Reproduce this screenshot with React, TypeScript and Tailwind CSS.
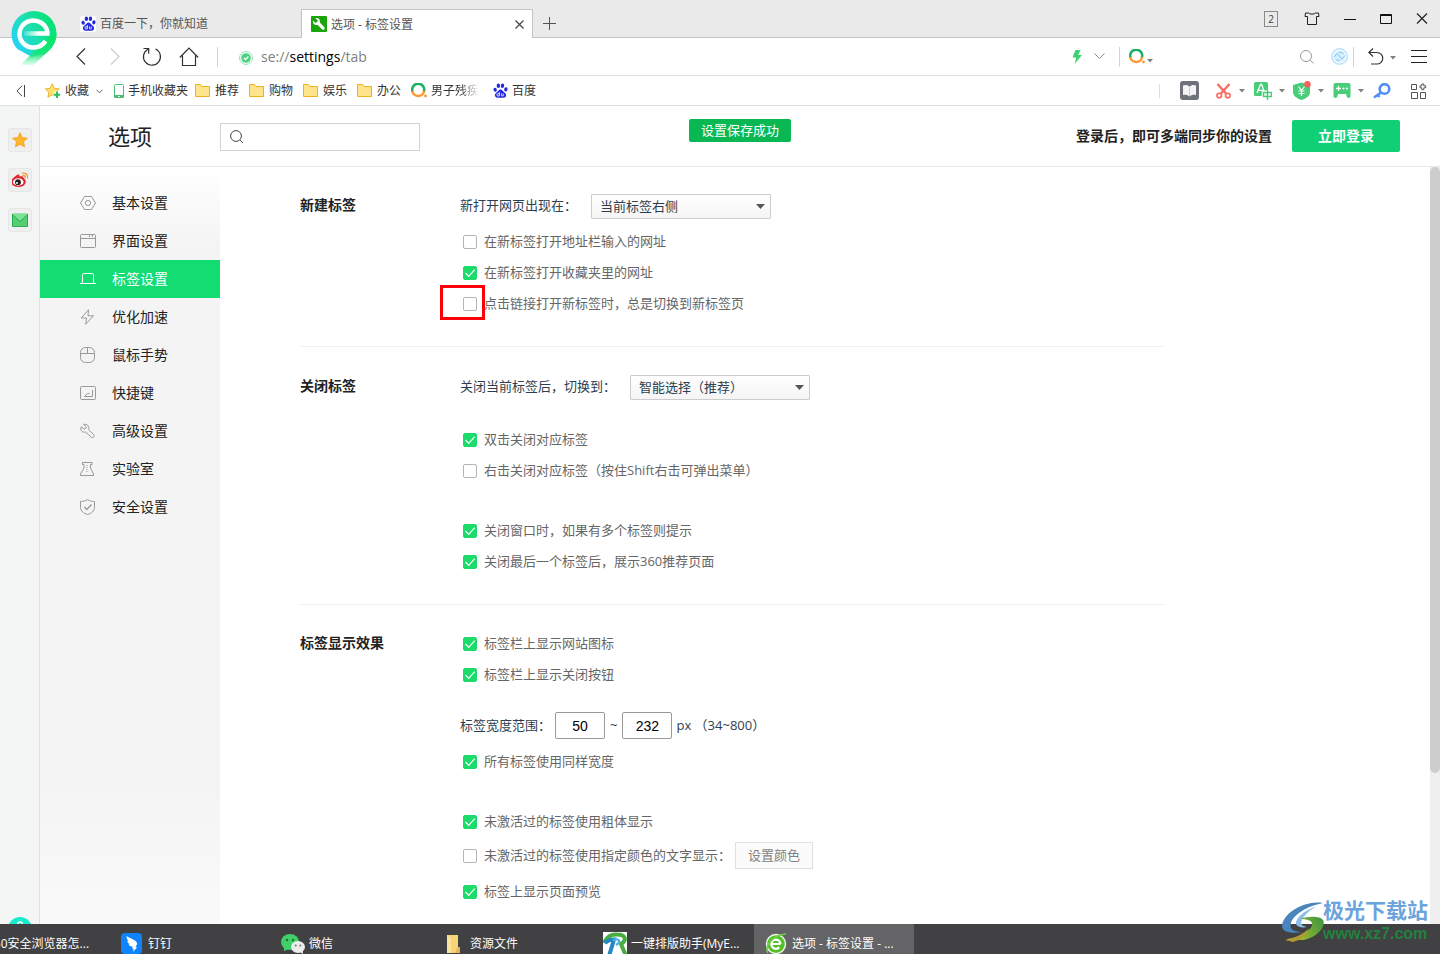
import React from "react";
import type { ReactNode } from "react";

type SvgProps = { w: number; h: number; box?: string; className?: string; children: ReactNode };

function Svg({ w, h, box, className, children }: SvgProps) {
  return (
    <svg width={w} height={h} viewBox={box ?? `0 0 ${w} ${h}`} fill="none" className={className ?? "shrink-0"} aria-hidden="true">
      {children}
    </svg>
  );
}

function Caret() {
  return (
    <Svg w={6} h={4}>
      <path d="M0 0h6L3 3.5z" fill="#808080" />
    </Svg>
  );
}

function Paw() {
  return (
    <Svg w={15} h={15} box="0 0 16 16">
      <g fill="#2329dc">
        <ellipse cx="2.3" cy="7.2" rx="1.8" ry="2.2" transform="rotate(-12 2.3 7.2)" />
        <ellipse cx="5.7" cy="2.9" rx="1.8" ry="2.5" />
        <ellipse cx="10.1" cy="2.9" rx="1.8" ry="2.5" transform="rotate(8 10.1 2.9)" />
        <ellipse cx="13.7" cy="6.8" rx="1.8" ry="2.2" transform="rotate(12 13.7 6.8)" />
        <path d="M8 6.800c1.800 0 2.400 1.600 3.600 2.800 1.300 1.200 2.600 2 2.400 3.700-.2 1.700-1.400 2.300-3 2.300H5c-1.700 0-2.900-.8-3-2.500-.1-1.600 1.200-2.300 2.400-3.400C5.700 8.500 6.200 6.800 8 6.800z" />
      </g>
      <path d="M6.800 9.700v4.100M6.800 11.400H5.300c-1.500 0-1.500 2.400 0 2.400h1.500M9 11.200v1.900c0 .7.8.7 1.900.7v-2.600" stroke="#fff" strokeWidth=".9" />
    </Svg>
  );
}

function Folder() {
  return (
    <Svg w={15} h={13}>
      <path d="M.5 12.500V.5h5l1.500 2h7.500v10z" fill="#ffe48c" stroke="#eeb11e" />
      <path d="M1 12.500h13.500" stroke="#eeb11e" />
    </Svg>
  );
}

function RingQ() {
  return (
    <Svg w={16} h={16}>
      <path d="M1.600 8.800A6 6 0 1 1 12.800 8.800" stroke="#19b264" strokeWidth="2.500" />
      <path d="M1.300 8a6 6 0 0 0 11.800 0" stroke="#fb9a37" strokeWidth="2.500" />
      <circle cx="14.500" cy="13" r="1.400" fill="#fb9a37" />
    </Svg>
  );
}

function BrandLogo() {
  return (
    <svg width="46" height="55" viewBox="0 0 46 55" fill="none" aria-hidden="true">
      <defs>
        <linearGradient id="brand" x1="4" y1="34" x2="42" y2="14" gradientUnits="userSpaceOnUse">
          <stop offset="0" stopColor="#26d3f2" />
          <stop offset=".5" stopColor="#1ddfb0" />
          <stop offset="1" stopColor="#07e274" />
        </linearGradient>
        <linearGradient id="tail" x1="0" y1="24" x2="0" y2="55" gradientUnits="userSpaceOnUse">
          <stop offset="0" stopColor="#05e562" />
          <stop offset=".6" stopColor="#1ae57c" />
          <stop offset="1" stopColor="#6cf0a8" stopOpacity=".1" />
        </linearGradient>
        <linearGradient id="bar" x1="12" y1="0" x2="34" y2="0" gradientUnits="userSpaceOnUse">
          <stop offset="0" stopColor="#fff" stopOpacity=".1" />
          <stop offset=".7" stopColor="#fff" />
        </linearGradient>
      </defs>
      <path d="M23 0a22.500 22.500 0 0 1 22.500 22.500c0 8-4 14-9 18.500L21 46 7 38.500C3 35 .5 29 .5 22.500A22.500 22.500 0 0 1 23 0z" fill="url(#brand)" />
      <path d="M45.500 22.500c0 7-3 12.500-7 16.500L22 54.500l-12-1L35 28z" fill="url(#tail)" />
      <path d="M36.500 22.500A14 13.500 0 1 0 34.500 30" stroke="#fff" strokeWidth="4.500" />
      <path d="M13 22.500h25.500" stroke="url(#bar)" strokeWidth="4.500" />
    </svg>
  );
}

const NAV: { label: string; icon: ReactNode; active?: boolean }[] = [
  {
    label: "基本设置",
    icon: (
      <g>
        <path d="M4.500 1.500h7l4 6.500-4 6.500h-7L.5 8z" />
        <circle cx="8" cy="8" r="2.600" />
      </g>
    ),
  },
  {
    label: "界面设置",
    icon: (
      <g>
        <rect x=".5" y="1.500" width="15" height="13" rx="1" />
        <path d="M.5 5.500h15M9.500 2v2M12.500 2v2" />
      </g>
    ),
  },
  { label: "标签设置", active: true, icon: <path d="M0 12.500h16M2.500 12.500v-9a1 1 0 0 1 1-1h9a1 1 0 0 1 1 1v9" /> },
  { label: "优化加速", icon: <path d="M8.500.8 1.200 9h5.300l-.8 6.200L13.500 6.800H8z" /> },
  {
    label: "鼠标手势",
    icon: (
      <g>
        <rect x=".5" y=".5" width="14" height="15" rx="5" />
        <path d="M.5 6.500h14M7.500.5v6" />
      </g>
    ),
  },
  {
    label: "快捷键",
    icon: (
      <g>
        <rect x=".5" y="1.500" width="15" height="13" rx="1" />
        <path d="M12.500 5v6.500H4.500l3-3h2" />
      </g>
    ),
  },
  {
    label: "高级设置",
    icon: <path d="M3.600 1.500 6.500 4.200 4.700 6.300 1.300 3.900C-.2 7.200 2.200 9.900 5.700 9l5.600 5.300c1.800 1.200 3.800-.8 2.600-2.400L8.700 6.800C9.600 3.200 7 .4 3.600 1.500z" />,
  },
  {
    label: "实验室",
    icon: (
      <g>
        <path d="M2.500 1.500h9.500v2h-1.500v3.500l3 6v1.500H.5V13l3.500-6V3.500H2.500z" />
        <path d="M7 4v7" strokeDasharray="1 1" />
      </g>
    ),
  },
  {
    label: "安全设置",
    icon: (
      <g>
        <path d="M7.500.6c2.200 1.300 4.500 1.900 7 1.900v6c0 3.400-3.200 5.900-7 7-3.800-1.100-7-3.600-7-7v-6c2.500 0 4.800-.6 7-1.900z" />
        <path d="m4.300 7.800 2.500 2.600 4.700-4.900" strokeWidth="1.400" />
      </g>
    ),
  },
];

function Check({ children, checked, marked }: { children: ReactNode; checked?: boolean; marked?: boolean }) {
  return (
    <label className="relative flex h-[31px] w-fit items-center gap-[7px] pl-[3px] text-[13px] text-[#666]">
      <span className="grid place-items-center">
        <input
          type="checkbox"
          defaultChecked={checked}
          className="peer size-[14px] appearance-none rounded-[2px] border border-[#b4b4b4] bg-white [grid-area:1/1] checked:border-[#1bdb6b] checked:bg-[#1bdb6b]"
        />
        <svg width="14" height="14" viewBox="0 0 14 14" fill="none" className="pointer-events-none hidden [grid-area:1/1] peer-checked:block" aria-hidden="true">
          <path d="m2.500 7 3.200 3.300L11.700 3.700" stroke="#fff" strokeWidth="1.200" />
        </svg>
      </span>
      {children}
      {marked && <span className="pointer-events-none absolute -left-5 -top-[3px] h-[35px] w-[45px] border-3 border-[#fb0007]" />}
    </label>
  );
}

function Picker({ id, label, value }: { id: string; label: string; value: string }) {
  return (
    <div className="flex items-center gap-[14px] text-[13px] text-[#2c3e50]">
      <label htmlFor={id} className="pb-[2px]">{label}</label>
      <span className="grid items-center">
        <select
          id={id}
          className="h-[25px] w-[180px] appearance-none rounded-[1px] border border-[#ccc] bg-linear-to-b from-white to-[#f5f5f5] px-2 [grid-area:1/1]"
        >
          <option>{value}</option>
        </select>
        <svg width="9" height="5" viewBox="0 0 9 5" className="pointer-events-none mr-[6px] justify-self-end [grid-area:1/1]" aria-hidden="true">
          <path d="M0 0h9L4.500 5z" fill="#555" />
        </svg>
      </span>
    </div>
  );
}

function Section({ title, pad, last, children }: { title: string; pad: string; last?: boolean; children: ReactNode }) {
  return (
    <section className={`flex w-full max-w-[864px] ${pad} ${last ? "" : "border-b border-[#f0f0f0] pb-[27px]"}`}>
      <h2 className={`w-40 shrink-0 text-[14px] font-bold leading-5 text-[#222] ${last ? "pt-[5px]" : "pt-px"}`}>{title}</h2>
      <div className="flex-1">{children}</div>
    </section>
  );
}

function TabStrip() {
  return (
    <header className="flex h-[38px] shrink-0 items-end border-b border-[#c3c3c3] bg-[#eaeaea] pl-20">
      <div className="flex h-[27px] w-[221px] items-center gap-1 text-[12px] text-[#555]">
        <span className="grid size-4 shrink-0 place-items-center rounded-[2px] bg-white">
          <Paw />
        </span>
        百度一下，你就知道
      </div>
      <div className="-mb-px flex h-[29px] w-[232px] items-center border border-b-0 border-[#c3c3c3] bg-white pl-[9px] pr-2 text-[12px] text-[#555]">
        <Svg w={16} h={16}>
          <rect width="16" height="16" rx="1" fill="#1ba30a" />
          <path d="M4.300 2.200 6.800 4.600 6 6.300l-1.800.5L2 4.600C1.300 7.700 3.800 9.700 6.400 8.800l4.800 4.700c1.600 1 3.300-.8 2.200-2.300L8.800 6.500C9.600 3.700 7.200 1.200 4.300 2.200z" fill="#fff" />
        </Svg>
        <span className="flex-1 pl-1 pt-px">选项 - 标签设置</span>
        <button type="button" aria-label="关闭标签页">
          <Svg w={9} h={9}>
            <path d="m.5.5 8 8m0-8-8 8" stroke="#444" strokeWidth="1.200" />
          </Svg>
        </button>
      </div>
      <button type="button" aria-label="新标签页" className="mb-[7px] ml-[10px]">
        <Svg w={13} h={13}>
          <path d="M6.500 0v13M0 6.500h13" stroke="#555" />
        </Svg>
      </button>
      <div className="ml-auto flex h-full items-center gap-6 pr-3">
        <button type="button" className="grid h-4 w-[14px] place-items-center border border-[#8a8a8a] text-[10px] leading-none text-[#444]">2</button>
        <button type="button" aria-label="皮肤" className="ml-[2px]">
          <Svg w={16} h={14}>
            <path d="M4.500 1H1.500L1 4.500h2.500v8h9v-8H15L14.500 1h-3c-1 1.500-6 1.500-7 0z" stroke="#222" />
          </Svg>
        </button>
        <button type="button" aria-label="最小化">
          <Svg w={12} h={12}>
            <path d="M0 6.500h12" stroke="#111" />
          </Svg>
        </button>
        <button type="button" aria-label="最大化">
          <Svg w={12} h={10}>
            <path d="M.5.5h11v9H.5zM0 1.500h12" stroke="#111" />
          </Svg>
        </button>
        <button type="button" aria-label="关闭">
          <Svg w={12} h={11}>
            <path d="m1 .5 10 10m0-10-10 10" stroke="#222" strokeWidth="1.200" />
          </Svg>
        </button>
      </div>
    </header>
  );
}

function Toolbar() {
  return (
    <div className="flex h-[38px] shrink-0 items-center border-b border-[#e0e0e0] pl-[76px] pr-[13px]">
      <div className="flex items-center gap-6">
        <button type="button" aria-label="后退">
          <Svg w={10} h={17}>
            <path d="M9 .5 1 8.500l8 8" stroke="#333" strokeWidth="1.200" />
          </Svg>
        </button>
        <button type="button" aria-label="前进">
          <Svg w={10} h={17}>
            <path d="m1 .5 8 8-8 8" stroke="#ccc" strokeWidth="1.200" />
          </Svg>
        </button>
      </div>
      <div className="ml-[22px] flex items-center gap-[17px]">
        <button type="button" aria-label="刷新">
          <Svg w={20} h={20}>
            <path d="M13.500 2a8.500 8.500 0 1 1-7.500.2M1.500 1.500h5.200v5.200" stroke="#333" strokeWidth="1.200" />
          </Svg>
        </button>
        <button type="button" aria-label="主页">
          <Svg w={20} h={20}>
            <path d="M.8 10.500 10 1.200l9.200 9.300M3.500 8.500v10h13v-10" stroke="#333" strokeWidth="1.200" />
          </Svg>
        </button>
      </div>
      <span className="ml-[18px] h-5 w-px bg-[#d5d5d5]" />
      <span className="ml-[21px] mt-[3px]">
        <Svg w={14} h={14}>
          <circle cx="7" cy="7" r="6.400" stroke="#8ce0ac" />
          <circle cx="7" cy="7" r="4.800" fill="#4fd184" />
          <path d="m4.800 7 1.700 1.700 2.900-3.200" stroke="#fff" strokeWidth="1.200" />
        </Svg>
      </span>
      <a href="#tab" className="ml-[8px] flex-1 text-[14px] text-[#808080]">
        se://<span className="text-black">settings</span>/tab
      </a>
      <div className="flex items-center">
        <Svg w={10} h={14}>
          <path d="M3.500 0h5L6.300 5H10L2.700 14l1.500-6.500H.5z" fill="#3fd074" />
        </Svg>
        <span className="ml-3">
          <Svg w={11} h={7}>
            <path d="m.5.5 5 5 5-5" stroke="#888" />
          </Svg>
        </span>
        <span className="ml-[14px] mr-[9px] h-5 w-px bg-[#d5d5d5]" />
        <RingQ />
        <span className="ml-[2px] mt-2">
          <Caret />
        </span>
      </div>
      <div className="ml-[147px] flex items-center">
        <button type="button" aria-label="搜索">
          <Svg w={14} h={14}>
            <circle cx="6" cy="6" r="5.500" stroke="#999" />
            <path d="m10 10 3.500 3.500" stroke="#999" />
          </Svg>
        </button>
        <span className="ml-[17px]">
          <Svg w={17} h={17}>
            <circle cx="8.500" cy="8.500" r="7.700" stroke="#b8e2fb" strokeWidth="1.500" />
            <circle cx="8.500" cy="8.500" r="6" fill="#d9effd" />
            <path d="m3 9 3-3.500L11 11l3-3.500M8 4.500l2-.5 2.500 2M4.500 11l2 1.500 2.500-.5" stroke="#7cc6f5" />
          </Svg>
        </span>
        <span className="ml-[5px] mr-[14px] h-5 w-px bg-[#d5d5d5]" />
        <button type="button" aria-label="撤销">
          <Svg w={16} h={17}>
            <path d="M5 .5.8 4.500l4.200 4M1 4.500h8a5.700 5.700 0 0 1 0 11.500H3" stroke="#333" strokeWidth="1.200" />
          </Svg>
        </button>
        <span className="ml-[6px] mt-[2px]">
          <Caret />
        </span>
        <button type="button" aria-label="菜单" className="ml-[15px]">
          <Svg w={16} h={14}>
            <path d="M0 .5h16M0 6.500h16M0 12.500h16" stroke="#222" />
          </Svg>
        </button>
      </div>
    </div>
  );
}

const FOLDERS = ["推荐", "购物", "娱乐", "办公"];

function BookmarkBar() {
  return (
    <div className="flex h-[30px] shrink-0 items-center border-b border-[#e0e0e0] pl-4 pr-[13px] text-[12px] text-[#333]">
      <button type="button" aria-label="收起">
        <Svg w={10} h={12}>
          <path d="M6 .8 1 6l5 5.200M8.500 0v12" stroke="#444" />
        </Svg>
      </button>
      <a href="#fav" className="ml-[19px] flex items-center gap-1">
        <Svg w={16} h={16}>
          <path d="m7.200.8 2.100 4.500 4.900.6-3.600 3.400.9 4.900-4.300-2.400-4.300 2.400.9-4.900L.3 5.900l4.800-.6z" fill="#ffe070" stroke="#f2b233" />
          <path d="M12 8v7.500M8.200 11.700h7.500" stroke="#fff" strokeWidth="4" />
          <path d="M12 8.500v6.500M8.700 11.700h6.500" stroke="#2fbf63" strokeWidth="2" />
        </Svg>
        收藏
      </a>
      <span className="ml-[7px] mt-[2px]">
        <Svg w={7} h={5}>
          <path d="m.5.8 3 3 3-3" stroke="#666" />
        </Svg>
      </span>
      <a href="#phone" className="ml-[11px] flex items-center gap-1">
        <Svg w={10} h={14}>
          <rect x=".5" y=".5" width="9" height="13" rx="1" fill="#fff" stroke="#45bf73" />
          <path d="M0 11h10v2l-1 1H1l-1-1z" fill="#45bf73" />
          <path d="M4 12.500h2" stroke="#fff" />
        </Svg>
        手机收藏夹
      </a>
      <nav className="ml-[7px] flex items-center gap-[10px]">
        {FOLDERS.map((f) => (
          <a key={f} href="#folder" className="flex items-center gap-[5px]">
            <Folder />
            {f}
          </a>
        ))}
        <a href="#so" className="flex items-center gap-1">
          <RingQ />
          <span className="w-12 overflow-hidden whitespace-nowrap [mask-image:linear-gradient(to_right,black_60%,transparent)]">男子残疾人</span>
        </a>
        <a href="#baidu" className="ml-1 flex items-center gap-1">
          <Paw />
          百度
        </a>
      </nav>
      <div className="ml-auto flex items-center">
        <span className="mr-[20px] h-[14px] w-px bg-[#ddd]" />
        <Svg w={19} h={19}>
          <rect width="19" height="19" rx="3" fill="#70727a" />
          <path d="M3 4.500c2.500-1 4.500-.5 6.500 1 2-1.500 4-2 6.500-1V14c-2.500-.6-4.500-.2-6.500 1.300C7.500 13.800 5.500 13.400 3 14z" fill="#f4f4f4" />
          <path d="M9.500 5.500v9.800" stroke="#ccc" />
        </Svg>
        <span className="ml-[17px] flex items-center gap-2">
          <Svg w={15} h={16}>
            <path d="M1.500 1 10.500 11M13.500 1 4.500 11" stroke="#fc6d65" strokeWidth="2.500" />
            <circle cx="3.200" cy="12.600" r="2.300" stroke="#fc6d65" strokeWidth="1.700" />
            <circle cx="11.800" cy="12.600" r="2.300" stroke="#fc6d65" strokeWidth="1.700" />
          </Svg>
          <Caret />
        </span>
        <span className="ml-[9px] flex items-center gap-[7px]">
          <Svg w={18} h={18}>
            <rect width="14" height="14" rx="1.500" fill="#48ce78" />
            <path d="m3 11 3.500-8.500h1L11 11M4.300 8.300h5" stroke="#fff" strokeWidth="1.300" />
            <path d="M13.500 8v10M9.500 10.500h8v4h-8z" stroke="#fff" strokeWidth="3.500" />
            <path d="M13.500 8v10M9.500 10.500h8v4h-8z" stroke="#48ce78" strokeWidth="1.500" />
          </Svg>
          <Caret />
        </span>
        <span className="ml-[8px] flex items-center gap-[7px]">
          <Svg w={18} h={19}>
            <path d="M8.500 1.500 17 4v7c0 4-4 6.500-8.500 8C4 17.500 0 15 0 11V4z" fill="#48ce78" />
            <path d="m5.500 5.500 3 4 3-4M8.500 9.500V15M5.500 10h6M5.500 12.500h6" stroke="#fff" strokeWidth="1.200" />
            <circle cx="14.500" cy="3.200" r="3.200" fill="#fb5f5b" />
          </Svg>
          <Caret />
        </span>
        <span className="ml-[9px] flex items-center gap-[7px]">
          <Svg w={18} h={15}>
            <path d="M2.500 0h13C17 0 17.500 1 17.500 2.500V13c0 2.500-3.500 2.500-4 0L13 11H5l-.5 2c-.5 2.500-4 2.500-4 0V2.500C.5 1 1 0 2.500 0z" fill="#48ce78" />
            <path d="M5.500 3v5M3 5.500h5" stroke="#fff" strokeWidth="1.300" />
            <circle cx="10.500" cy="5.500" r="1.100" fill="#fff" />
            <circle cx="14" cy="5.500" r="1.100" fill="#fff" />
          </Svg>
          <Caret />
        </span>
        <span className="ml-[9px]">
          <Svg w={18} h={16}>
            <circle cx="11.500" cy="6" r="4.800" stroke="#4f8ff5" strokeWidth="2.600" />
            <path d="m8 9.500-7 5M4 11l2.500 3" stroke="#4f8ff5" strokeWidth="2.600" />
          </Svg>
        </span>
        <button type="button" aria-label="扩展" className="ml-5">
          <Svg w={16} h={16}>
            <path d="M.5 1.500h5v5h-5zM.5 9.500h6v6h-6zM9.500 9.500h5v6h-5z" stroke="#555" />
            <path d="M10.800 2.800V1h2v1.800h1.900v2h-1.900v1.900h-2V4.800H9v-2z" stroke="#555" />
          </Svg>
        </button>
      </div>
    </div>
  );
}

const RAIL: { label: string; icon: ReactNode }[] = [
  { label: "收藏夹", icon: <path d="m8 .8 2.200 4.800 5.200.6-3.900 3.500 1.100 5.200L8 12.300l-4.600 2.600 1.100-5.200L.6 6.200l5.200-.6z" fill="#ffb62b" stroke="#f29a22" strokeWidth=".8" /> },
  {
    label: "微博",
    icon: (
      <g transform="translate(-1 0)">
        <ellipse cx="7.500" cy="9.800" rx="7.300" ry="5.200" fill="#e6232d" />
        <path d="M2 7c2-3.500 5-5 6-4.500 1 .6.200 2 .2 2s4-1 4 1L13 9z" fill="#e6232d" />
        <ellipse cx="7.300" cy="10" rx="5.300" ry="3.700" fill="#fff" />
        <circle cx="7" cy="10.200" r="2.900" fill="#222" />
        <circle cx="6" cy="11" r="1" fill="#fff" />
        <path d="M11 1.200c3.500-.8 6.500 2 5.500 5.500M11.500 3.600c1.800-.4 3.200.8 2.700 2.600" stroke="#f39a2d" strokeWidth="1.300" />
      </g>
    ),
  },
  {
    label: "邮件",
    icon: (
      <g>
        <rect x="0" y="1.500" width="16" height="13" rx="1" fill="#55cf72" />
        <path d="M0 2h16L8 9z" fill="#7be393" />
        <path d="m0 2.500 8 7 8-7M.5 2v12.500h15V2" stroke="#22a94d" strokeWidth=".9" />
      </g>
    ),
  },
];

function SideRail() {
  return (
    <aside className="flex w-10 shrink-0 flex-col items-center gap-4 overflow-hidden border-r border-[#e0e0e0] bg-[#f4f6f6] pt-[22px]">
      {RAIL.map((r) => (
        <button key={r.label} type="button" aria-label={r.label} className="grid size-6 shrink-0 place-items-center rounded-[3px] border border-[#e6e6e6] bg-[#efefef]">
          <Svg w={16} h={16}>{r.icon}</Svg>
        </button>
      ))}
      <button type="button" aria-label="帮助" className="-mb-[17px] mt-auto">
        <Svg w={24} h={24}>
          <circle cx="12" cy="12" r="12" fill="#14ebcb" />
          <path d="M9.500 7.500a2.500 2.500 0 1 1 3.500 2.300c-1 .5-1 1-1 2.700" stroke="#fff" strokeWidth="1.500" />
        </Svg>
      </button>
    </aside>
  );
}

function SettingsHeader() {
  return (
    <div className="relative flex h-[61px] shrink-0 items-center border-b border-[#e8e8e8] pl-[68px] pr-10">
      <h1 className="w-28 text-[22px] text-[#222]">选项</h1>
      <label className="mt-[2px] flex h-7 w-[200px] items-center border border-[#d4d4d4] pl-[9px]">
        <Svg w={14} h={14}>
          <circle cx="6" cy="6" r="5.400" stroke="#444" />
          <path d="m10 10 3 3" stroke="#444" />
        </Svg>
        <input type="search" aria-label="搜索设置" className="min-w-0 flex-1 px-2 text-[13px] outline-none" />
      </label>
      <div role="status" className="absolute left-1/2 top-[13px] flex h-[23px] -translate-x-1/2 items-center rounded-[2px] bg-[#09b853] px-3 text-[13px] text-white">
        设置保存成功
      </div>
      <p className="ml-auto pb-[2px] text-[14px] font-bold text-[#222]">登录后，即可多端同步你的设置</p>
      <button type="button" className="ml-5 h-8 w-[108px] rounded-[2px] bg-[#11cf75] pb-[2px] text-[14px] font-bold text-white">立即登录</button>
    </div>
  );
}

function TaskItem({ icon, active, children }: { icon?: ReactNode; active?: boolean; children: ReactNode }) {
  return (
    <button type="button" className={`flex h-[39px] w-40 shrink-0 items-center text-left text-[12px] text-white ${active ? "bg-[#646365]" : ""}`}>
      <span className="grid w-[38px] shrink-0 place-items-center pl-[5px]">{icon}</span>
      <span className="whitespace-nowrap">{children}</span>
    </button>
  );
}

function Taskbar() {
  return (
    <footer className="flex h-[30px] shrink-0 items-start gap-px overflow-hidden bg-[#414042]">
      <div className="-ml-[51px] flex">
        <TaskItem>360安全浏览器怎...</TaskItem>
      </div>
      <TaskItem
        icon={
          <Svg w={21} h={21}>
            <rect width="21" height="21" rx="4" fill="#0d83fd" />
            <path d="M5.500 3c4 2.500 9 3.500 10.500 7 .3 2-1.200 3.500-1.600 4.300h1.800l-4.300 4.700.8-3.300H11l1-1.900c-2.500 0-3.800-1-4.500-2.500l1.500.2C7 10.500 6.500 9 6.300 7.800l1.400.4C6 6.500 5.500 5 5.500 3z" fill="#fff" />
          </Svg>
        }
      >
        钉钉
      </TaskItem>
      <TaskItem
        icon={
          <Svg w={24} h={20}>
            <ellipse cx="9" cy="8" rx="9" ry="8" fill="#3fd168" />
            <path d="m3 13 0 4 5-2z" fill="#3fd168" />
            <circle cx="6" cy="6" r="1.200" fill="#256b39" />
            <circle cx="12" cy="6" r="1.200" fill="#256b39" />
            <ellipse cx="17" cy="13" rx="7" ry="6" fill="#ececec" />
            <path d="m19 18 3 2-.3-4z" fill="#ececec" />
            <circle cx="14.700" cy="11.500" r="1" fill="#777" />
            <circle cx="19.300" cy="11.500" r="1" fill="#777" />
          </Svg>
        }
      >
        微信
      </TaskItem>
      <TaskItem
        icon={
          <Svg w={16} h={18}>
            <path d="M1 0h11v12l2 1v5H1z" fill="#f6d477" />
            <path d="M1 0 5 3v15H1z" fill="#fbe39d" />
            <path d="M12 12h2v6H9z" fill="#e5b450" />
          </Svg>
        }
      >
        资源文件
      </TaskItem>
      <TaskItem
        icon={
          <Svg w={24} h={24}>
            <rect width="24" height="24" fill="#fff" />
            <path d="M1 11C4 4 8 2 14 2.500c9 0 10 6 4 9.500l5 12" stroke="#45ae3f" strokeWidth="4" />
            <path d="M2 11c3-3 5-3.500 9-3.500L6 24" stroke="#2487c6" strokeWidth="4" />
            <path d="M10 8c7-2 8 2 3 5" stroke="#4db5e6" strokeWidth="2.500" />
          </Svg>
        }
      >
        一键排版助手(MyE...
      </TaskItem>
      <TaskItem
        active
        icon={
          <Svg w={22} h={22}>
            <circle cx="11" cy="11" r="9.500" fill="#55bf2c" stroke="#e9f7e2" strokeWidth="1.500" />
            <path d="M15.500 11a4.600 4.600 0 1 0-1.200 3.300M6.500 11h9" stroke="#fff" strokeWidth="2.200" />
            <path d="M3 20C-1 13 8 2 21 1" stroke="#6ed33f" strokeWidth="1.500" />
          </Svg>
        }
      >
        选项 - 标签设置 - ...
      </TaskItem>
    </footer>
  );
}

function Watermark() {
  return (
    <div className="pointer-events-none absolute bottom-2 right-[12px] flex items-center">
      <svg width="46" height="42" viewBox="0 0 46 42" fill="none" aria-hidden="true">
        <defs>
          <linearGradient id="swoosh" x1="0" y1="42" x2="46" y2="14" gradientUnits="userSpaceOnUse">
            <stop offset="0" stopColor="#c9a02e" />
            <stop offset=".4" stopColor="#8fb52f" />
            <stop offset="1" stopColor="#2f8f45" />
          </linearGradient>
        </defs>
        <path d="M42 2C24-1 2 12 1 25c0 6 8 8 21 6-10 0-14-3-12-9C12 14 26 5 42 2z" fill="#4a86bd" />
        <path d="M36 5C24 9 14 17 15 23c1 3 6 4 11 3-5-1-7-3-5-7 2-5 8-10 15-14z" fill="#89bfe8" />
        <path d="M19 18c9-3 20-3 23 1 4 7-9 21-24 20l-14 1c14-3 29-12 27-18-1-3-6-4-12-4z" fill="url(#swoosh)" />
        <path d="M5 38c9-1 18-5 23-11-3 8-10 13-17 14z" fill="#b09a33" />
      </svg>
      <div className="-ml-1">
        <div className="text-[21px] font-bold leading-6 text-[#6ba4dc]">极光下载站</div>
        <div className="font-['Liberation_Sans',sans-serif] text-[16px] font-bold leading-6 text-[#23803f]">www.xz7.com</div>
      </div>
    </div>
  );
}

export default function App() {
  return (
    <div className="relative flex h-screen flex-col overflow-hidden bg-white font-['Open_Sans','Noto_Sans_CJK_SC',sans-serif]">
      <TabStrip />
      <Toolbar />
      <BookmarkBar />
      <div className="absolute left-[11px] top-[11px]">
        <BrandLogo />
      </div>
      <div className="flex min-h-0 flex-1">
        <SideRail />
        <main className="flex min-w-0 flex-1 flex-col">
          <SettingsHeader />
          <div className="flex min-h-0 flex-1">
            <nav className="w-[180px] shrink-0 bg-[linear-gradient(to_bottom,#fff_0,#f4f4f4_80px,#f4f4f4_82%,#fafafa_100%)] pt-[17px]">
              {NAV.map((n) => (
                <a
                  key={n.label}
                  href="#section"
                  className={`flex h-[38px] items-center gap-4 pl-10 text-[14px] ${n.active ? "bg-[#12dc72] text-white" : "text-[#222]"}`}
                >
                  <svg width="16" height="16" viewBox="0 0 16 16" fill="none" stroke={n.active ? "#fff" : "#999"} className="shrink-0" aria-hidden="true">
                    {n.icon}
                  </svg>
                  <span className="pb-[2px]">{n.label}</span>
                </a>
              ))}
            </nav>
            <div className="min-w-0 flex-1 overflow-hidden pl-20">
              <Section title="新建标签" pad="pt-[27px]">
                <Picker id="open-at" label="新打开网页出现在：" value="当前标签右侧" />
                <div className="mt-[7px]">
                  <Check>在新标签打开地址栏输入的网址</Check>
                  <Check checked>在新标签打开收藏夹里的网址</Check>
                  <Check marked>点击链接打开新标签时，总是切换到新标签页</Check>
                </div>
              </Section>
              <Section title="关闭标签" pad="pt-[28px]">
                <Picker id="after-close" label="关闭当前标签后，切换到：" value="智能选择（推荐）" />
                <div className="mt-6">
                  <Check checked>双击关闭对应标签</Check>
                  <Check>右击关闭对应标签（按住Shift右击可弹出菜单）</Check>
                </div>
                <div className="mt-[29px]">
                  <Check checked>关闭窗口时，如果有多个标签则提示</Check>
                  <Check checked>关闭最后一个标签后，展示360推荐页面</Check>
                </div>
              </Section>
              <Section title="标签显示效果" pad="pt-[23px]" last>
                <Check checked>标签栏上显示网站图标</Check>
                <Check checked>标签栏上显示关闭按钮</Check>
                <div className="mb-[7px] mt-[22px] flex items-center gap-1 text-[13px] text-[#2c3e50]">
                  <label htmlFor="min-w">标签宽度范围：</label>
                  <input id="min-w" defaultValue="50" className="h-[27px] w-[50px] rounded-[2px] border border-[#999] text-center font-['Liberation_Sans',sans-serif] text-[14px] text-black" />
                  <span className="px-px">~</span>
                  <input aria-label="最大宽度" defaultValue="232" className="h-[27px] w-[50px] rounded-[2px] border border-[#999] text-center font-['Liberation_Sans',sans-serif] text-[14px] text-black" />
                  <span>px （34~800）</span>
                </div>
                <Check checked>所有标签使用同样宽度</Check>
                <div className="mt-[29px]">
                  <Check checked>未激活过的标签使用粗体显示</Check>
                </div>
                <div className="mb-[5px] mt-[3px] flex items-center gap-1">
                  <Check>未激活过的标签使用指定颜色的文字显示：</Check>
                  <button type="button" className="h-[27px] w-[78px] border border-[#e0e0e0] bg-[#fbfbfb] text-[13px] text-[#808080]">设置颜色</button>
                </div>
                <Check checked>标签上显示页面预览</Check>
              </Section>
            </div>
            <div className="w-[10px] shrink-0 bg-[#efefef]">
              <div className="h-4/5 rounded-full bg-[#cdcdcd]" />
            </div>
          </div>
        </main>
      </div>
      <Taskbar />
      <Watermark />
    </div>
  );
}
